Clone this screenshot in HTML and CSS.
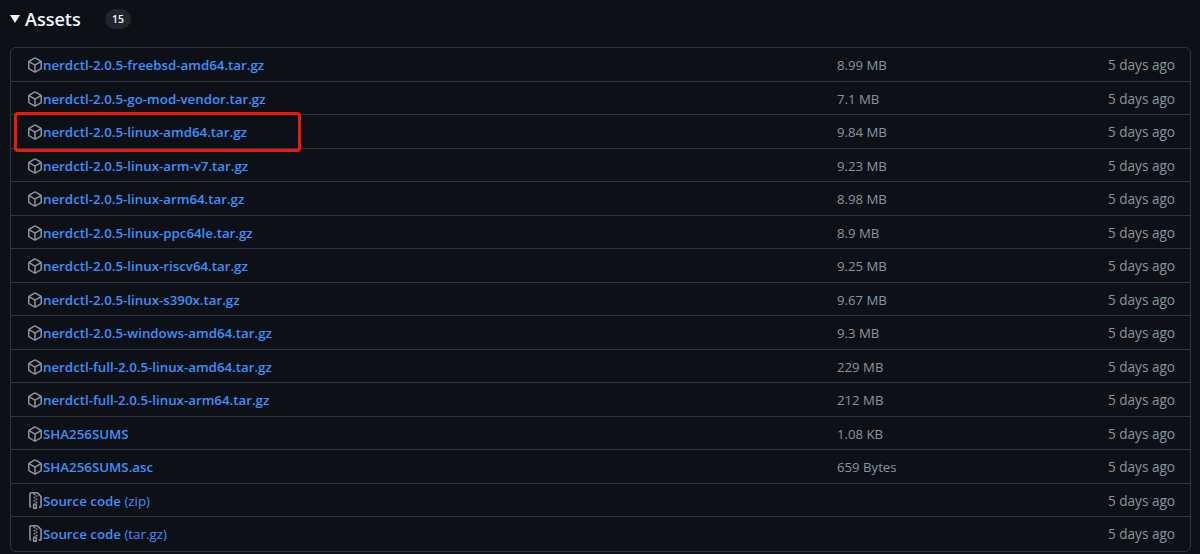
FILE: index.html
```html
<!DOCTYPE html>
<html>
<head>
  <title>Assets</title>
  <link rel="stylesheet" href="styles.css">
</head>
<body>
  <svg class="sprites" width="0" height="0">
    <symbol id="icon-package" viewBox="0 0 16 16">
      <path d="m8.878.392 5.25 3.045c.54.314.872.89.872 1.514v6.098a1.75 1.75 0 0 1-.872 1.514l-5.25 3.045a1.75 1.75 0 0 1-1.756 0l-5.25-3.045A1.75 1.75 0 0 1 1 11.049V4.951c0-.624.332-1.201.872-1.514L7.122.392a1.75 1.75 0 0 1 1.756 0ZM7.875 1.69l-4.63 2.685L8 7.133l4.755-2.758-4.63-2.685a.248.248 0 0 0-.25 0ZM2.5 5.677v5.372c0 .09.047.171.125.216l4.625 2.683V8.432Zm6.25 8.271 4.625-2.683a.25.25 0 0 0 .125-.216V5.677L8.75 8.432Z"/>
    </symbol>
    <symbol id="icon-zip" viewBox="0 0 16 16">
      <path d="M3.5 1.75v11.5c0 .09.048.173.126.217a.75.75 0 0 1-.752 1.298A1.748 1.748 0 0 1 2 13.25V1.75C2 .784 2.784 0 3.75 0h5.586c.464 0 .909.185 1.237.513l2.914 2.914c.329.328.513.773.513 1.237v8.586A1.75 1.75 0 0 1 12.25 15h-.5a.75.75 0 0 1 0-1.5h.5a.25.25 0 0 0 .25-.25V4.664a.25.25 0 0 0-.073-.177L9.513 1.573a.25.25 0 0 0-.177-.073H7.25a.75.75 0 0 1 0 1.5h-.5a.75.75 0 0 1 0-1.5h-3a.25.25 0 0 0-.25.25Zm3.75 8.75h.5c.966 0 1.75.784 1.75 1.75v3a.75.75 0 0 1-.75.75h-2.5a.75.75 0 0 1-.75-.75v-3c0-.966.784-1.75 1.75-1.75ZM6 5.25a.75.75 0 0 1 .75-.75h.5a.75.75 0 0 1 0 1.5h-.5A.75.75 0 0 1 6 5.25Zm.75 2.25h.5a.75.75 0 0 1 0 1.5h-.5a.75.75 0 0 1 0-1.5ZM8 6.75A.75.75 0 0 1 8.75 6h.5a.75.75 0 0 1 0 1.5h-.5A.75.75 0 0 1 8 6.75ZM8.75 3h.5a.75.75 0 0 1 0 1.5h-.5a.75.75 0 0 1 0-1.5ZM8 9.75A.75.75 0 0 1 8.75 9h.5a.75.75 0 0 1 0 1.5h-.5A.75.75 0 0 1 8 9.75Zm-1 2.5v2.25h1v-2.25a.25.25 0 0 0-.25-.25h-.5a.25.25 0 0 0-.25.25Z"/>
    </symbol>
  </svg>

  <div class="assets-header">
    <span class="caret"></span>
    <h2>Assets</h2>
    <span class="counter">15</span>
  </div>

  <div class="assets">
    <div class="highlight"></div>
    <div class="row"><svg class="icon"><use href="#icon-package"/></svg><a class="name">nerdctl-2.0.5-freebsd-amd64.tar.gz</a><span class="size">8.99 MB</span><span class="date">5 days ago</span></div>
    <div class="row"><svg class="icon"><use href="#icon-package"/></svg><a class="name">nerdctl-2.0.5-go-mod-vendor.tar.gz</a><span class="size">7.1 MB</span><span class="date">5 days ago</span></div>
    <div class="row"><svg class="icon"><use href="#icon-package"/></svg><a class="name">nerdctl-2.0.5-linux-amd64.tar.gz</a><span class="size">9.84 MB</span><span class="date">5 days ago</span></div>
    <div class="row"><svg class="icon"><use href="#icon-package"/></svg><a class="name">nerdctl-2.0.5-linux-arm-v7.tar.gz</a><span class="size">9.23 MB</span><span class="date">5 days ago</span></div>
    <div class="row"><svg class="icon"><use href="#icon-package"/></svg><a class="name">nerdctl-2.0.5-linux-arm64.tar.gz</a><span class="size">8.98 MB</span><span class="date">5 days ago</span></div>
    <div class="row"><svg class="icon"><use href="#icon-package"/></svg><a class="name">nerdctl-2.0.5-linux-ppc64le.tar.gz</a><span class="size">8.9 MB</span><span class="date">5 days ago</span></div>
    <div class="row"><svg class="icon"><use href="#icon-package"/></svg><a class="name">nerdctl-2.0.5-linux-riscv64.tar.gz</a><span class="size">9.25 MB</span><span class="date">5 days ago</span></div>
    <div class="row"><svg class="icon"><use href="#icon-package"/></svg><a class="name">nerdctl-2.0.5-linux-s390x.tar.gz</a><span class="size">9.67 MB</span><span class="date">5 days ago</span></div>
    <div class="row"><svg class="icon"><use href="#icon-package"/></svg><a class="name">nerdctl-2.0.5-windows-amd64.tar.gz</a><span class="size">9.3 MB</span><span class="date">5 days ago</span></div>
    <div class="row"><svg class="icon"><use href="#icon-package"/></svg><a class="name">nerdctl-full-2.0.5-linux-amd64.tar.gz</a><span class="size">229 MB</span><span class="date">5 days ago</span></div>
    <div class="row"><svg class="icon"><use href="#icon-package"/></svg><a class="name">nerdctl-full-2.0.5-linux-arm64.tar.gz</a><span class="size">212 MB</span><span class="date">5 days ago</span></div>
    <div class="row"><svg class="icon"><use href="#icon-package"/></svg><a class="name">SHA256SUMS</a><span class="size">1.08 KB</span><span class="date">5 days ago</span></div>
    <div class="row"><svg class="icon"><use href="#icon-package"/></svg><a class="name">SHA256SUMS.asc</a><span class="size">659 Bytes</span><span class="date">5 days ago</span></div>
    <div class="row"><svg class="icon icon-zip"><use href="#icon-zip"/></svg><a class="name">Source code <span class="ext">(zip)</span></a><span class="size"></span><span class="date">5 days ago</span></div>
    <div class="row"><svg class="icon icon-zip"><use href="#icon-zip"/></svg><a class="name">Source code <span class="ext">(tar.gz)</span></a><span class="size"></span><span class="date">5 days ago</span></div>
  </div>
</body>
</html>
```

FILE: styles.css
```css
html, body {
  height: 100%;
}

body {
  margin: 0;
  padding: 0 9px 0 10px;
  background-color: #0d1117;
  color: #f0f6fc;
  font-family: "Open Sans", "Noto Sans", sans-serif;
  overflow: hidden;
}

.sprites {
  display: block;
}

.assets-header {
  display: flex;
  align-items: center;
  height: 37px;
}

.caret {
  width: 0;
  height: 0;
  margin-top: 1px;
  border-left: 5px solid transparent;
  border-right: 5px solid transparent;
  border-top: 8px solid #f0f6fc;
}

.assets-header h2 {
  margin: 0 0 0 5px;
  width: 80px;
  font-size: 18px;
  font-weight: 600;
}

.counter {
  width: 26px;
  height: 20px;
  margin-top: 1px;
  border-radius: 10px;
  background-color: #21262d;
  font-size: 10.5px;
  font-weight: 600;
  line-height: 20px;
  text-align: center;
}

.assets {
  position: relative;
  margin-top: 10px;
  border: 1px solid #30363d;
  border-radius: 6px;
}

.row {
  display: flex;
  align-items: center;
  height: 33.5px;
  padding: 1px 15px 0 17px;
  box-sizing: border-box;
  border-top: 1px solid #30363d;
  font-size: 13.6px;
  line-height: 18px;
}

.row:nth-child(2) {
  height: 32.9px;
  border-top: none;
}

.row:last-child {
  height: 35px;
  padding-top: 0;
  padding-bottom: 1px;
}

.icon {
  flex: none;
  width: 16px;
  height: 16px;
  margin-left: -1px;
  fill: #8b949e;
}

.icon-zip {
  width: 17px;
  height: 17px;
  margin-right: -1px;
}

.name {
  width: 794px;
  color: #3f8ffa;
  font-size: 13.3px;
  font-weight: 600;
  white-space: nowrap;
}

.ext {
  font-weight: 400;
}

.size {
  color: #8b949e;
  font-size: 13.2px;
}

.date {
  margin-left: auto;
  color: #8b949e;
}

.highlight {
  position: absolute;
  left: 3px;
  top: 64px;
  width: 287px;
  height: 40px;
  box-sizing: border-box;
  border: 3px solid #f0170f;
  border-radius: 4px;
  z-index: 1;
}
```
